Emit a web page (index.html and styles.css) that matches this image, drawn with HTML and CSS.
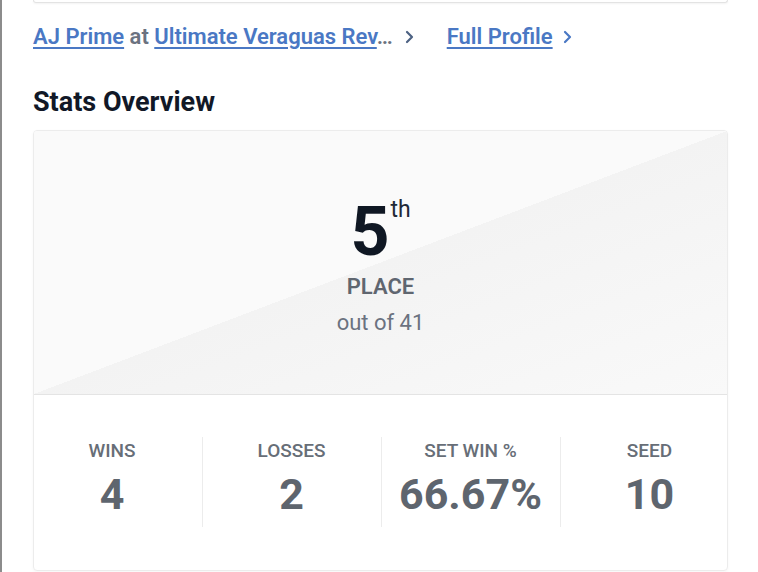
FILE: index.html
```html
<!DOCTYPE html>
<html>
<head>
<meta charset="utf-8">
<link rel="stylesheet" href="styles.css">
</head>
<body>
<div class="page">
  <div class="prev-card"></div>
  <div class="links">
    <span class="crumb"><a class="lnk" href="#">AJ Prime</a> at <a class="lnk" href="#">Ultimate Veraguas Rev</a>…</span>
    <svg class="chev dark" width="12" height="16" viewBox="0 0 12 16"><path d="M3 3 L8 8 L3 13" fill="none" stroke="currentColor" stroke-width="2.2" stroke-linecap="round" stroke-linejoin="round"/></svg>
    <a class="lnk full" href="#">Full Profile</a>
    <svg class="chev blue" width="12" height="16" viewBox="0 0 12 16"><path d="M3 3 L8 8 L3 13" fill="none" stroke="currentColor" stroke-width="2.2" stroke-linecap="round" stroke-linejoin="round"/></svg>
  </div>
  <h2 class="title">Stats Overview</h2>
  <div class="card">
    <div class="hero">
      <div class="place"><span class="num">5</span><sup class="ord">th</sup></div>
      <div class="place-label">PLACE</div>
      <div class="outof">out of 41</div>
    </div>
    <div class="stats">
      <div class="stat"><div class="lbl">WINS</div><div class="val">4</div></div>
      <div class="stat"><div class="lbl">LOSSES</div><div class="val">2</div></div>
      <div class="stat"><div class="lbl">SET WIN %</div><div class="val">66.67%</div></div>
      <div class="stat"><div class="lbl">SEED</div><div class="val">10</div></div>
    </div>
  </div>
</div>
</body>
</html>
```
FILE: styles.css
```css
html, body {
  margin: 0;
  padding: 0;
  background: #ffffff;
}
body {
  font-family: Roboto, "Liberation Sans", sans-serif;
  border-left: 2px solid #8c8c8c;
  min-height: 572px;
  box-sizing: border-box;
  overflow: hidden;
}
.page {
  width: 695px;
  margin-left: 31px;
}
.prev-card {
  height: 2px;
  border: 1px solid #e3e3e3;
  border-top: none;
  border-radius: 0 0 6px 6px;
  box-shadow: 0 1px 2px rgba(0,0,0,0.05);
}
.links {
  display: flex;
  align-items: center;
  margin-top: 20px;
  height: 28px;
  line-height: 28px;
  font-size: 22px;
  font-weight: 600;
  color: #6b7280;
  white-space: nowrap;
}
.lnk {
  color: #4a78c4;
  text-decoration: underline;
  text-underline-offset: 3px;
  text-decoration-thickness: 2px;
}
.chev {
  flex: none;
}
.chev.dark {
  color: #4d6283;
  margin-left: 11px;
  margin-right: 31px;
}
.chev.blue {
  color: #4a78c4;
  margin-left: 9px;
}
.title {
  margin: 35px 0 0 0;
  font-size: 27px;
  font-weight: 700;
  color: #111827;
  line-height: 32px;
}
.card {
  margin-top: 12px;
  border: 1px solid #ececec;
  border-radius: 4px;
  box-shadow: 0 1px 3px rgba(0,0,0,0.04);
  overflow: hidden;
}
.hero {
  height: 264px;
  box-sizing: border-box;
  padding-top: 67px;
  text-align: center;
  background: linear-gradient(to bottom right, #fafafa 50%, #f3f3f3 50%, #f9f9f9 100%);
  border-bottom: 1px solid #e4e4e4;
}
.place {
  line-height: 68px;
  height: 68px;
}
.num {
  font-size: 68px;
  font-weight: 700;
  color: #0f1723;
}
.ord {
  font-size: 23px;
  line-height: 23px;
  font-weight: 400;
  color: #1f2937;
  vertical-align: top;
  position: relative;
  top: 0;
  margin-left: 1px;
}
.place-label {
  margin-top: 7px;
  font-size: 22px;
  font-weight: 600;
  color: #5f6670;
  line-height: 28px;
}
.outof {
  margin-top: 8px;
  font-size: 22px;
  color: #6b7280;
  line-height: 28px;
}
.stats {
  display: grid;
  grid-template-columns: repeat(4, 179px);
  justify-content: center;
  padding: 42px 0 43px;
}
.stat {
  text-align: center;
  padding: 2px 0 9px;
}
.stat + .stat {
  border-left: 1px solid #ececec;
}
.lbl {
  font-size: 19px;
  font-weight: 500;
  color: #676e77;
  line-height: 24px;
}
.val {
  margin-top: 7px;
  font-size: 43px;
  font-weight: 700;
  color: #5e656e;
  line-height: 48px;
}
```
